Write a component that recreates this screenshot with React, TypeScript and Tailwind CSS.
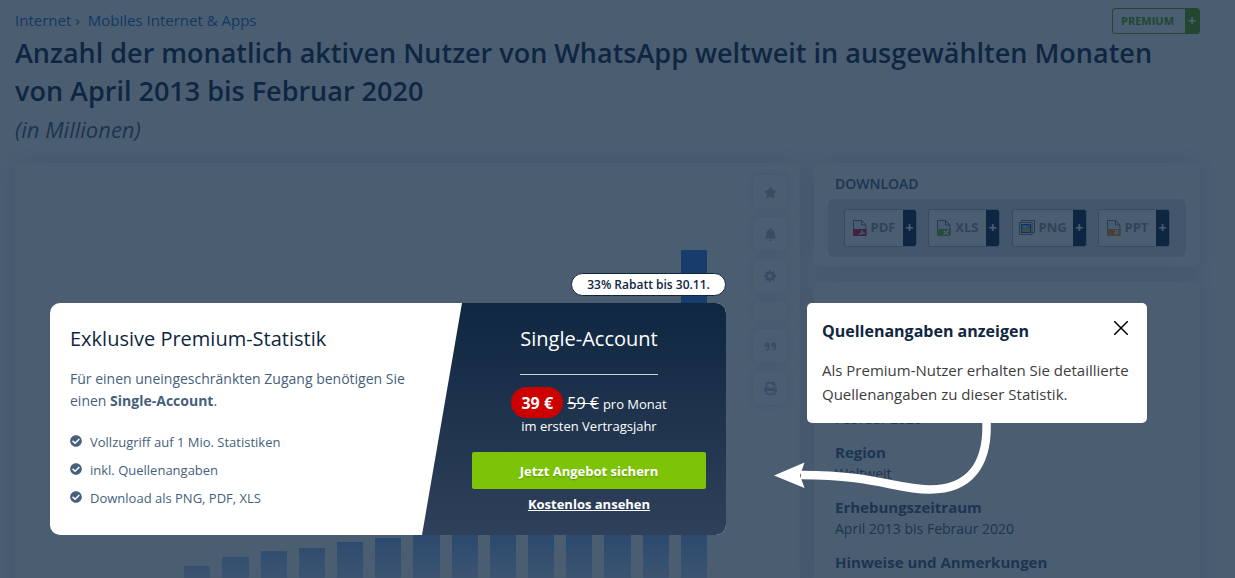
import type { ReactNode } from "react";
import { FaBell, FaCheckCircle, FaPrint, FaStar } from "react-icons/fa";
import { FaQuoteRight } from "react-icons/fa6";

const chartValues = [220, 283, 331, 364, 380, 413, 435, 500, 600, 700, 800, 900, 1000, 1500, 2000];
const chartMax = 2000;

const benefits = [
  "Vollzugriff auf 1 Mio. Statistiken",
  "inkl. Quellenangaben",
  "Download als PNG, PDF, XLS",
];

const GearIcon = () => (
  <svg viewBox="0 128 1536 1536" fill="currentColor" className="size-3">
    <path d="M1024 896q0-106-75-181t-181-75-181 75-75 181 75 181 181 75 181-75 75-181zm512-109v222q0 12-8 23t-20 13l-185 28q-19 54-39 91 35 50 107 138 10 12 10 25t-9 23q-27 37-99 108t-94 71q-12 0-26-9l-138-108q-44 23-91 38-16 136-29 186-7 28-36 28h-222q-14 0-24.5-8.5t-11.5-21.5l-28-184q-49-16-90-37l-141 107q-10 9-25 9-14 0-25-11-126-114-165-168-7-10-7-23 0-12 8-23 15-21 51-66.5t54-70.5q-27-50-41-99l-183-27q-13-2-21-12.5t-8-23.5v-222q0-12 8-23t19-13l186-28q14-46 39-92-40-57-107-138-10-12-10-24 0-10 9-23 26-36 98.5-107.5t94.5-71.5q13 0 26 10l138 107q44-23 91-38 16-136 29-186 7-28 36-28h222q14 0 24.5 8.5t11.5 21.5l28 184q49 16 90 37l142-107q9-9 24-9 13 0 25 10 129 119 165 170 7 8 7 22 0 12-8 23-15 21-51 66.5t-54 70.5q26 50 41 98l183 28q13 2 21 12.5t8 23.5z" />
  </svg>
);

const FileIcon = ({ color, children }: { color: string; children: ReactNode }) => (
  <svg viewBox="0 0 14 16" className="h-4 w-3.5">
    <path d="M.5 15.500V.5h8l4.500 4.500v10.500z" fill="#f4f6f8" stroke="#6d7c8d" />
    <path d="M8.500.5V5H13" fill="none" stroke="#6d7c8d" />
    <path d="M0 9h13.500v7H0z" fill={color} />
    {children}
  </svg>
);

const PdfIcon = () => (
  <FileIcon color="#c81e3a">
    <path d="M6 14.500c2-1 3-2.500 2.800-4 .3 2 1.500 3 3.200 3-2-.3-4 0-6 1z" fill="none" stroke="#fff" />
  </FileIcon>
);

const XlsIcon = () => (
  <FileIcon color="#6cb52a">
    <path d="M6.500 10.500l5 4.500m0-4.500l-5 4.500M10 10.500h2" fill="none" stroke="#fff" strokeWidth="1.300" />
  </FileIcon>
);

const PptIcon = () => (
  <FileIcon color="#f08a33">
    <path d="M8.500 15v-4.500h2.200v2.300H8.500" fill="none" stroke="#fff" strokeWidth="1.200" />
  </FileIcon>
);

const PngIcon = () => (
  <svg viewBox="0 0 16 16" className="size-4">
    <path d="M2.500.5h13v12h-13z" fill="#f4f6f8" stroke="#6d7c8d" />
    <path d="M.5 2.500h12.500v12H.5z" fill="#f4f6f8" stroke="#6d7c8d" />
    <path d="M2 4h10v9H2z" fill="#1f4e8c" />
    <path d="M3 5h8v7H3z" fill="#4fb4ff" />
    <path d="M3 9.500l2-1 2 1 2-1 2 .5v3H3z" fill="#f0c419" />
    <path d="M4 6.500h3v1H4z" fill="#fff" />
  </svg>
);

const downloads = [
  { label: "PDF", icon: <PdfIcon />, width: "w-[73px]" },
  { label: "XLS", icon: <XlsIcon />, width: "w-[72px]" },
  { label: "PNG", icon: <PngIcon />, width: "w-[75px]" },
  { label: "PPT", icon: <PptIcon />, width: "w-[72px]" },
];

const tools = [
  { label: "Favorit", icon: <FaStar /> },
  { label: "Benachrichtigung", icon: <FaBell /> },
  { label: "Einstellungen", icon: <GearIcon /> },
  { label: "Teilen", icon: null },
  { label: "Zitieren", icon: <FaQuoteRight /> },
  { label: "Drucken", icon: <FaPrint /> },
];

const PageHeader = () => (
  <header className="pt-2">
    <div className="flex h-[26px] items-center justify-between">
      <nav className="flex gap-1 pb-0.5 text-[15px] text-[#1f6fc0]">
        <a href="#internet">Internet</a>
        <span className="text-[#455f7c]">›</span>
        <a href="#apps" className="pl-1">
          Mobiles Internet &amp; Apps
        </a>
      </nav>
      <span className="flex h-[26px] overflow-hidden rounded-[3px] border border-[#5aa700] text-[11px] font-bold text-[#5aa700]">
        <span className="flex w-[72px] items-center pl-2">PREMIUM</span>
        <span className="flex w-3.5 items-center justify-center bg-[#5aa700] text-sm text-white">+</span>
      </span>
    </div>
    <h1 className="text-[27px] leading-[38px] font-semibold text-[#0f2741]">
      Anzahl der monatlich aktiven Nutzer von WhatsApp weltweit in ausgewählten Monaten von April 2013 bis Februar 2020
    </h1>
    <p className="text-[22px] leading-[38px] text-[#455f7c] italic">(in Millionen)</p>
  </header>
);

const Paywall = () => (
  <section className="absolute top-[140px] right-[74px] left-[35px] z-20">
    <span className="absolute right-0 bottom-full mb-[7px] flex h-[23px] w-[155px] items-center justify-center rounded-xl border border-[#0f2741] bg-white text-xs font-semibold text-[#0f2741]">
      33% Rabatt bis 30.11.
    </span>
    <div className="flex h-[232px] overflow-hidden rounded-[10px] bg-white">
      <div className="flex-1 pt-[22px] pl-5 text-[#455f7c]">
        <h2 className="text-xl leading-7 text-[#0f2741]">Exklusive Premium-Statistik</h2>
        <p className="mt-[15px] text-sm leading-[22px]">
          Für einen uneingeschränkten Zugang benötigen Sie
          <br />
          einen <b>Single-Account</b>.
        </p>
        <ul className="mt-4 text-[13px] leading-7">
          {benefits.map((benefit) => (
            <li key={benefit} className="flex items-center gap-2">
              <FaCheckCircle className="mb-0.5 size-3" />
              {benefit}
            </li>
          ))}
        </ul>
      </div>
      <div className="flex w-[304px] flex-col items-center bg-linear-to-b from-[#0f2741] to-[#2f405a] pt-[22px] pr-5 pl-[50px] text-[13px] text-white [clip-path:polygon(40px_0,100%_0,100%_100%,0_100%)]">
        <h2 className="border-b border-[#cfd4da] pb-[21px] text-xl leading-7">Single-Account</h2>
        <p className="mt-3 flex h-[31px] items-center gap-1">
          <b className="flex h-[31px] w-[52px] items-center justify-center rounded-full bg-[#cc0000] text-base">39 €</b>
          <s className="text-base">59 €</s>
          <span className="pt-1">pro Monat</span>
        </p>
        <p className="leading-4">im ersten Vertragsjahr</p>
        <button className="mt-[18px] h-[37px] w-full rounded-[2px] bg-[#7dc307] pt-0.5 font-bold text-shadow-sm">
          Jetzt Angebot sichern
        </button>
        <a href="#kostenlos" className="mt-1.5 font-bold underline">
          Kostenlos ansehen
        </a>
      </div>
    </div>
  </section>
);

const SourceHint = () => (
  <aside className="absolute top-[140px] -left-[7px] z-20 w-[340px]">
    <div className="rounded-[5px] bg-white px-[15px] pt-4 pb-[17px]">
      <div className="flex items-center justify-between">
        <h2 className="text-base leading-6 font-bold text-[#0f2741]">Quellenangaben anzeigen</h2>
        <button aria-label="Schließen" className="mr-1 mb-1.5">
          <svg viewBox="0 0 14 14" className="size-3.5" stroke="#000" strokeWidth="1.500">
            <path d="M0 0l14 14M14 0L0 14" />
          </svg>
        </button>
      </div>
      <p className="mt-[15px] text-[15px] leading-6 text-[#3d3d3d]">
        Als Premium-Nutzer erhalten Sie detaillierte Quellenangaben zu dieser Statistik.
      </p>
    </div>
    <svg viewBox="0 0 220 72" className="absolute top-full -left-[34px] h-[72px] w-[220px]">
      <path d="M213.500 -1C215 41 197 67 156 66.500C122 66 101 52 28 52" fill="none" stroke="#fff" strokeWidth="8.500" />
      <path d="M1 52.500L31.500 39.500L27 52.500L31.500 65z" fill="#fff" />
    </svg>
  </aside>
);

const ChartCard = () => (
  <section className="relative flex min-w-0 flex-1 rounded-md bg-white shadow-[0_0_24px_rgba(15,39,65,0.15)]">
    <div className="flex flex-1 flex-col pl-[131px]">
      <div className="relative grid h-[455px] grid-cols-15 items-end gap-3">
        {chartValues.map((value, i) => (
          <div key={i} className="bg-[#3080f0]" style={{ height: (value / chartMax) * 368 }} />
        ))}
        <div className="absolute inset-x-0 bottom-0 h-[138px] bg-linear-to-b from-white/0 to-white" />
      </div>
    </div>
    <div className="flex w-[93px] flex-col items-end gap-2 pt-3 pr-[13px]">
      {tools.map((tool) => (
        <button
          key={tool.label}
          aria-label={tool.label}
          className={`flex w-[34px] items-center justify-center rounded-md bg-white text-[13px] text-[#b4c0cf] shadow-[0_0_8px_rgba(15,39,65,0.15)] ${
            tool.icon ? "h-[34px]" : "h-5"
          }`}
        >
          {tool.icon}
        </button>
      ))}
    </div>
    <Paywall />
  </section>
);

const Sidebar = () => (
  <div className="relative flex w-[386px] flex-col gap-[15px]">
    <section className="rounded-md bg-white px-3.5 pt-[11px] pb-2.5 shadow-[0_0_24px_rgba(15,39,65,0.15)]">
      <h2 className="pb-[5px] pl-[7px] text-sm font-semibold text-[#455f7c]">DOWNLOAD</h2>
      <div className="flex justify-between rounded-md bg-[#e2e4e8] py-2.5 pr-4 pl-4">
        {downloads.map((item) => (
          <button
            key={item.label}
            className={`flex h-[38px] overflow-hidden rounded-[3px] border border-[#a9b6c6] bg-white text-[13px] font-bold text-[#8d98a4] ${item.width}`}
          >
            <span className="flex h-full flex-1 items-center justify-center gap-1">
              {item.icon}
              {item.label}
            </span>
            <span className="flex h-full w-[13px] items-center justify-center bg-[#0f2741] text-sm text-white">+</span>
          </button>
        ))}
      </div>
    </section>
    <section className="rounded-md bg-white px-[21px] pt-[126px] pb-5 shadow-[0_0_24px_rgba(15,39,65,0.15)]">
      <dl className="text-sm leading-[21px] text-[#455f7c]">
        <dd>Februar 2020</dd>
        <dt className="mt-3 text-[15px] leading-[22px] font-bold">Region</dt>
        <dd>Weltweit</dd>
        <dt className="mt-3 text-[15px] leading-[22px] font-bold">Erhebungszeitraum</dt>
        <dd>April 2013 bis Febraur 2020</dd>
        <dt className="mt-3 text-[15px] leading-[22px] font-bold">Hinweise und Anmerkungen</dt>
      </dl>
    </section>
    <SourceHint />
  </div>
);

const App = () => {
  return (
    <div className="relative h-screen overflow-hidden bg-white pr-[35px] pl-[15px] font-['Open_Sans',sans-serif]">
      <PageHeader />
      <main className="mt-[15px] flex gap-3.5">
        <ChartCard />
        <Sidebar />
      </main>
      <div className="absolute inset-0 z-10 bg-[#0f2741]/75" />
    </div>
  );
};

export default App;
